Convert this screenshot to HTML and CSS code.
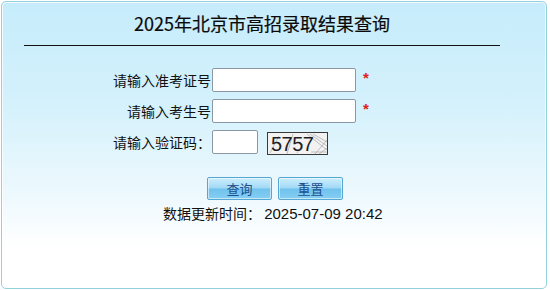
FILE: index.html
```html
<!DOCTYPE html>
<html lang="zh-CN">
<head>
<meta charset="utf-8">
<title>2025年北京市高招录取结果查询</title>
<link rel="stylesheet" href="styles.css">
</head>
<body>
<div class="box">
  <div class="head">
    <h1 class="title">2025年北京市高招录取结果查询</h1>
    <div class="rule"></div>
  </div>
  <form class="form">
    <div class="row">
      <label class="label">请输入准考证号</label>
      <input class="field" type="text">
      <span class="req">*</span>
    </div>
    <div class="row">
      <label class="label">请输入考生号</label>
      <input class="field" type="text">
      <span class="req">*</span>
    </div>
    <div class="row">
      <label class="label">请输入验证码：</label>
      <input class="field short" type="text">
      <svg class="captcha" width="61" height="23" viewBox="0 0 61 23">
        <rect x="0.5" y="0.5" width="60" height="22" fill="#f2f2f2" stroke="#3a3a3a"/>
        <g stroke="#9a9a9a" stroke-width="0.6" fill="none">
          <path d="M3 21 L12 4"/>
          <path d="M20 22 L26 2"/>
          <path d="M40 2 L60 18"/>
          <path d="M43 2 L60 14"/>
          <path d="M46 2 L60 10"/>
          <path d="M48 22 L60 8"/>
          <path d="M52 22 L60 16"/>
          <path d="M44 20 L60 20"/>
          <path d="M30 21 L36 12"/>
        </g>
        <text x="4" y="19" class="code">5757</text>
      </svg>
    </div>
  </form>
  <div class="actions">
    <button class="btn" type="button">查询</button>
    <button class="btn" type="button">重置</button>
  </div>
  <p class="update">数据更新时间：&nbsp;<span class="time">2025-07-09 20:42</span></p>
</div>
</body>
</html>
```

FILE: styles.css
```css
html, body {
  margin: 0;
  padding: 0;
  background: #ffffff;
}
body {
  font-family: "Noto Sans CJK SC", "Noto Sans", sans-serif;
  color: #111;
}
.box {
  box-sizing: border-box;
  width: 546px;
  height: 288px;
  margin: 1px 0 0 1px;
  border: 1px solid #93d2dc;
  border-radius: 5px;
  box-shadow: inset 0 0 0 1px rgba(255,255,255,0.75);
  background: linear-gradient(#c6ecfb 0%, #d4f1fc 35%, #ebf8fd 65%, #ffffff 86%, #ffffff 100%);
  display: flex;
  flex-direction: column;
}
.head {
  margin: 8px 0 0 22px;
  width: 476px;
}
.title {
  margin: 0;
  height: 26px;
  line-height: 26px;
  font-size: 18px;
  font-weight: normal;
  text-align: center;
  color: #0a0a0a;
  -webkit-text-stroke: 0.2px #0a0a0a;
}
.rule {
  margin-top: 9px;
  height: 1px;
  background: #111;
}
.form {
  margin: 22px 0 0 0;
  padding-left: 110px;
  display: flex;
  flex-direction: column;
  gap: 7px;
}
.row {
  display: flex;
  align-items: center;
  height: 24px;
}
.label {
  width: 99px;
  margin-right: 1px;
  text-align: right;
  font-size: 14px;
  line-height: 24px;
  white-space: nowrap;
  color: #111;
}
.field {
  box-sizing: border-box;
  width: 144px;
  height: 24px;
  margin: 0;
  padding: 0 3px;
  border: 1px solid #8a98a6;
  border-radius: 2px;
  background: #fff;
  font-size: 14px;
}
.field.short {
  width: 46px;
}
.req {
  margin-left: 7px;
  color: #e02020;
  font-family: "Liberation Sans", sans-serif;
  font-size: 15px;
  font-weight: bold;
  line-height: 24px;
  position: relative;
  top: -2px;
}
.captcha {
  display: block;
  margin: 3px 0 0 9px;
}
.code {
  font-family: "Liberation Sans", sans-serif;
  font-size: 20px;
  fill: #1e1e1e;
  letter-spacing: -0.5px;
}
.actions {
  margin-top: 23px;
  padding-left: 205px;
  display: flex;
  gap: 6px;
}
.btn {
  box-sizing: border-box;
  width: 65px;
  height: 23px;
  margin: 0;
  padding: 0;
  border: 1px solid #55a6d0;
  border-radius: 2px;
  background: linear-gradient(#cdeefd 0%, #a3daf6 45%, #70c2ee 55%, #88cff3 100%);
  box-shadow: inset 0 0 0 1px rgba(255,255,255,0.55);
  color: #1d4f8c;
  font-family: "Noto Sans CJK SC", sans-serif;
  font-size: 13px;
  line-height: 21px;
}
.update {
  margin: 3px 0 0 0;
  padding-left: 161px;
  font-size: 14px;
  line-height: 20px;
  color: #111;
}
.time {
  font-family: "Liberation Sans", sans-serif;
  font-size: 15px;
}
```
